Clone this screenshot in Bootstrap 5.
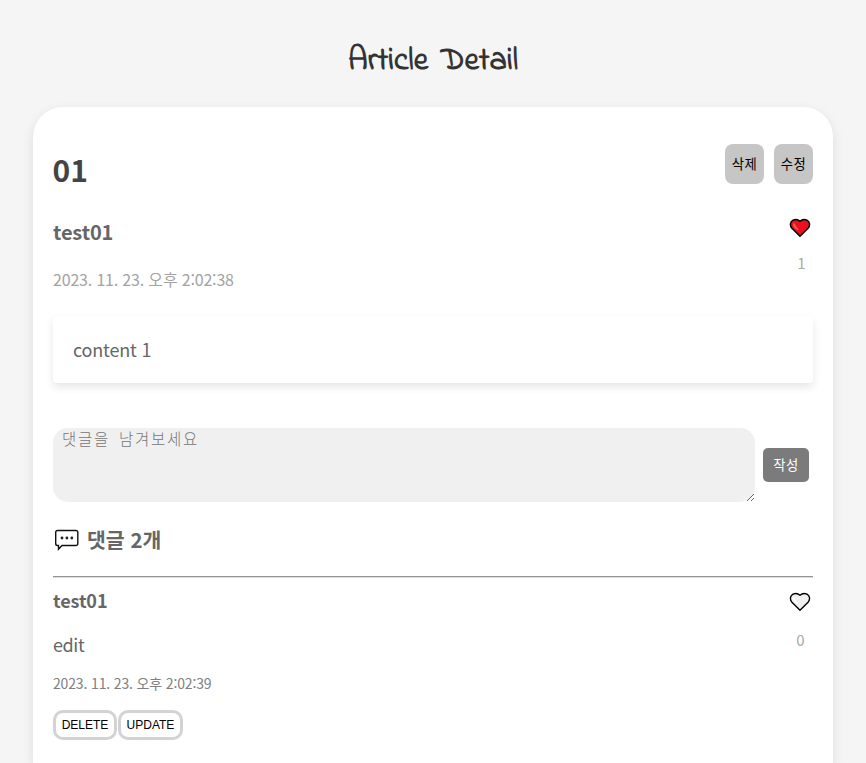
<!DOCTYPE html>
<html lang="ko">
<head>
<meta charset="utf-8">
<meta name="viewport" content="width=device-width, initial-scale=1">
<title>Article Detail</title>
<link href="https://cdn.jsdelivr.net/npm/bootstrap@5.3.0/dist/css/bootstrap.min.css" rel="stylesheet">
<style>
html,body{height:100%}
body{background:#f5f5f5;color:#666;font-family:"Noto Sans CJK KR",sans-serif;line-height:1.5}
.page-title{height:107px;padding-top:43px;font-family:"Indie Flower","Comic Sans MS",cursive;font-size:32px;line-height:38px;color:#333;font-weight:700;word-spacing:5px}
.article{width:800px;height:656px;padding:37px 20px 0;border-radius:30px 30px 0 0;box-shadow:0 4px 12px rgba(0,0,0,.1)}
.top-row{height:54px}
.tools{gap:10px}
.subject{font-size:30px;line-height:50px;color:#444;margin-left:-.5px}
.btn-tool{width:39px;height:40px;padding:0;border:0;border-radius:8px;background:#c6c6c6;color:#000;font-size:13.33px;letter-spacing:.5px;white-space:nowrap}
.meta-row{height:118px}
.writer{font-size:20px;line-height:30px;margin-top:19px;letter-spacing:-.15px}
.stamp{font-size:16px;line-height:24px;color:#a3a3a3;margin-top:20px;letter-spacing:-.18px}
.like-col{width:26px}
.meta-row .like-col{padding-top:20px}
.like-num{font-size:15px;line-height:22px;color:#aaa}
.meta-row .like-num{margin-top:14px;margin-left:3px}
.content-box{height:67px;padding:18px 20px;font-size:18px;line-height:30px;border-radius:4px;letter-spacing:-.18px;box-shadow:0 4px 8px rgba(0,0,0,.1)}
.reply-form{margin-top:45px;height:74px;gap:8px}
.reply-form textarea{width:702px;height:74px;padding:0 9px;border:0;border-radius:15px;background:#f0f0f0;font-family:"Noto Sans CJK KR",sans-serif;font-size:15.5px;line-height:20px;letter-spacing:1.740px;word-spacing:2.800px}
.reply-form textarea::placeholder{color:#757575;font-weight:300;opacity:1}
.btn-send{width:46px;height:34px;padding:0;border:0;border-radius:5px;background:#7b7b7b;color:#fff;font-size:13.33px;letter-spacing:.5px;white-space:nowrap}
.count-row{height:74px}
.count-row svg{margin:2px 7px 0 1px}
.count-text{font-size:20.5px;line-height:74px}
.rule{height:2px;border-top:1px solid #949494;border-bottom:1px solid #ddd}
.reply-writer{font-size:18px;line-height:26px;margin-top:9px;letter-spacing:-.1px}
.reply-text{font-size:18px;line-height:26px;margin-top:18px;letter-spacing:-.4px}
.reply-date{font-size:14px;line-height:20px;margin-top:16px;color:#808080;letter-spacing:-.15px}
.reply-actions{margin-top:17px}
.btn-edit{width:64px;height:30px;padding:0;border:3px solid #d3d3d3;border-radius:10px;background:#fff;color:#000;font:12px/24px "Liberation Sans",sans-serif;margin-right:1px}
.btn-edit+.btn-edit{width:65px}
.reply-heart{margin-top:14px}
.reply-heart+.like-num{margin-top:17px;margin-left:1px}
</style>
<script src="https://cdn.jsdelivr.net/npm/bootstrap@5.3.0/dist/js/bootstrap.bundle.min.js"></script>
</head>
<body class="overflow-hidden">
<h1 class="page-title text-center mb-0">Article Detail</h1>
<main class="article bg-white mx-auto">
  <div class="top-row d-flex justify-content-between align-items-start">
    <h2 class="subject fw-bold mb-0">01</h2>
    <div class="tools d-flex">
      <button class="btn btn-tool">삭제</button>
      <button class="btn btn-tool">수정</button>
    </div>
  </div>
  <div class="meta-row d-flex justify-content-between">
    <div>
      <div class="writer fw-bold">test01</div>
      <div class="stamp">2023. 11. 23. 오후 2:02:38</div>
    </div>
    <div class="like-col d-flex flex-column align-items-center">
      <svg width="22" height="20" viewBox="0 0 22 20"><path d="M11 18.300 2.700 10C.6 7.300 1.200 3.700 4 2.200 6.500 1 9.200 1.600 11 3.200c1.800-1.600 4.500-2.200 7-1 2.800 1.500 3.400 5.100 1.300 7.800Z" fill="#ea1020" stroke="#000" stroke-width="1.500" stroke-linejoin="round"/><path d="M5 6.200c.2 2 1.400 3.800 3.600 5" fill="none" stroke="#f4624c" stroke-width="1.700" stroke-linecap="round"/></svg>
      <div class="like-num">1</div>
    </div>
  </div>
  <div class="content-box">content 1</div>
  <form class="reply-form d-flex align-items-center">
    <textarea class="form-control flex-shrink-0" placeholder="댓글을 남겨보세요"></textarea>
    <button type="button" class="btn btn-send">작성</button>
  </form>
  <div class="count-row d-flex align-items-center">
    <svg width="26" height="22" viewBox="0 0 26 22"><path d="M3.500 1.500h18.500a1.800 1.800 0 0 1 1.800 1.800v11.400a1.800 1.800 0 0 1-1.800 1.800H8L4.500 20.200V16.500h-1a1.800 1.800 0 0 1-1.800-1.800V3.300a1.800 1.800 0 0 1 1.800-1.800Z" fill="#fff" stroke="#111" stroke-width="1.400"/><g fill="#222"><circle cx="8" cy="9" r="1.400"/><circle cx="12.900" cy="9" r="1.400"/><circle cx="17.800" cy="9" r="1.400"/></g></svg>
    <div class="count-text fw-bold">댓글 2개</div>
  </div>
  <div class="rule"></div>
  <div class="d-flex justify-content-between">
    <div>
      <div class="reply-writer fw-bold">test01</div>
      <div class="reply-text">edit</div>
      <div class="reply-date">2023. 11. 23. 오후 2:02:39</div>
      <div class="reply-actions d-flex"><button class="btn-edit">DELETE</button><button class="btn-edit">UPDATE</button></div>
    </div>
    <div class="like-col d-flex flex-column align-items-center">
      <svg class="reply-heart" width="22" height="20" viewBox="0 0 22 20"><path d="M11 18.300 2.700 10C.6 7.300 1.200 3.700 4 2.200 6.500 1 9.200 1.600 11 3.200c1.800-1.600 4.500-2.200 7-1 2.800 1.500 3.400 5.100 1.300 7.800Z" fill="#f0f0f0" stroke="#000" stroke-width="1.400" stroke-linejoin="round"/><path d="M5 6.200c.2 2 1.400 3.800 3.600 5" fill="none" stroke="#fff" stroke-width="1.700" stroke-linecap="round"/></svg>
      <div class="like-num">0</div>
    </div>
  </div>
</main>
</body>
</html>
